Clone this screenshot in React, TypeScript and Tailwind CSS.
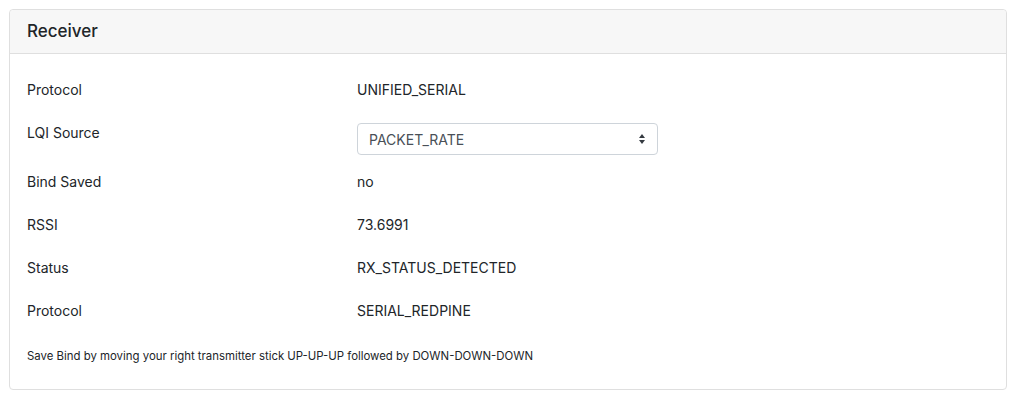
import React from "react";

const rows: { label: string; value: string; select?: boolean; h: string }[] = [
  { label: "Protocol", value: "UNIFIED_SERIAL", h: "h-[43px]" },
  { label: "LQI Source", value: "PACKET_RATE", select: true, h: "h-[49px]" },
  { label: "Bind Saved", value: "no", h: "h-[43px]" },
  { label: "RSSI", value: "73.6991", h: "h-[43px]" },
  { label: "Status", value: "RX_STATUS_DETECTED", h: "h-[43px]" },
  { label: "Protocol", value: "SERIAL_REDPINE", h: "h-[43px]" },
];

export default function App() {
  return (
    <div
      className="w-[1016px] h-[402px] bg-white p-[9px] text-[#212529]"
      style={{ fontFamily: "Inter, 'Liberation Sans', sans-serif" }}
    >
      <div className="border border-[#dfdfdf] rounded-[4px] h-[381px] flex flex-col">
        <div className="h-[44px] bg-[#f7f7f7] border-b border-[#dfdfdf] rounded-t-[4px] flex items-center px-[17px]">
          <h5 className="text-[17px] font-medium leading-none">Receiver</h5>
        </div>
        <div className="px-[17px] pt-[24px]">
          {rows.map((r, i) => (
            <div key={i} className={`flex items-start ${r.h}`}>
              <div className="w-[330px] text-[14px] leading-[21px] pt-[1px]">{r.label}</div>
              {r.select ? (
                <div className="w-[301px] h-[32px] mt-[2px] border border-[#ced4da] rounded-[4px] flex items-center justify-between pl-[11px] pr-[12px] text-[14px] text-[#495057]">
                  <span>{r.value}</span>
                  <svg width="6" height="10" viewBox="0 0 6 10">
                    <path d="M3 0 L6 4 L0 4 Z" fill="#343a40" />
                    <path d="M3 10 L6 6 L0 6 Z" fill="#343a40" />
                  </svg>
                </div>
              ) : (
                <div className="text-[14px] leading-[21px] pt-[1px]">{r.value}</div>
              )}
            </div>
          ))}
          <p className="text-[11.4px] leading-[17px] mt-[6px]">
            Save Bind by moving your right transmitter stick UP-UP-UP followed by DOWN-DOWN-DOWN
          </p>
        </div>
      </div>
    </div>
  );
}
